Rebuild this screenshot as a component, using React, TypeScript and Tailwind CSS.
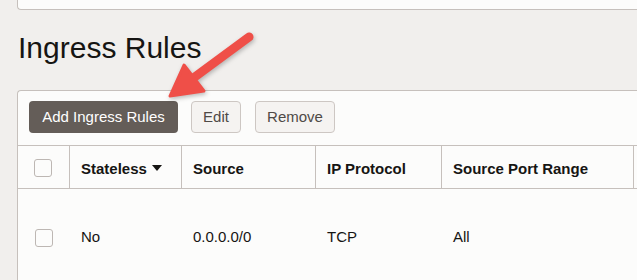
import React from "react";

export default function App() {
  const font = { fontFamily: '"Liberation Sans", Arial, sans-serif' };
  return (
    <div className="relative w-[637px] h-[280px] overflow-hidden bg-[#f1efed]" style={font}>
      <div className="w-[660px] pl-[17px] flex flex-col">
        <div className="h-[10px] bg-[#fcfcfb] border-l border-b border-[#c6c0bc] rounded-bl-[4px]" />
        <h1 className="mt-[23px] text-[30px] leading-[30px] font-normal text-[#161513] pl-[1px]">Ingress Rules</h1>
        <div className="mt-[27px] bg-[#fcfcfb] border-l border-t border-[#c6c0bc] rounded-tl-[4px] h-[200px]">
          <div className="flex pl-[11px] pt-[10px] pb-[12px]">
            <button className="w-[149px] h-[32px] rounded-[4px] bg-[#645d58] text-white text-[15px]">Add Ingress Rules</button>
            <button className="ml-[13px] w-[50px] h-[32px] rounded-[4px] bg-[#f5f3f1] border border-[#cdc7c3] text-[#4f4a46] text-[15px]">Edit</button>
            <button className="ml-[14px] w-[80px] h-[32px] rounded-[4px] bg-[#f5f3f1] border border-[#cdc7c3] text-[#4f4a46] text-[15px]">Remove</button>
          </div>
          <div className="flex h-[44px] border-t border-b border-[#c6c0bc] text-[15px] font-bold text-[#161513]">
            <div className="w-[52px] border-r border-[#c6c0bc] flex items-center justify-center pr-[1px]">
              <span className="block w-[18px] h-[18px] rounded-[3px] border border-[#bdb7b3] bg-[#fcfcfb] mt-[1px]" />
            </div>
            <div className="w-[112px] border-r border-[#c6c0bc] flex items-center pl-[11px] pt-[4px]">
              <span>Stateless</span>
              <svg width="10" height="6" viewBox="0 0 10 6" className="ml-[5px] -mt-[3px]">
                <path d="M0 0 L10 0 L5 6 Z" fill="#161513" />
              </svg>
            </div>
            <div className="w-[134px] border-r border-[#c6c0bc] flex items-center pl-[11px] pt-[4px]">Source</div>
            <div className="w-[126px] border-r border-[#c6c0bc] flex items-center pl-[11px] pt-[4px]">IP Protocol</div>
            <div className="w-[192px] border-r border-[#c6c0bc] flex items-center pl-[11px] pt-[4px]">Source Port Range</div>
            <div className="flex-1" />
          </div>
          <div className="flex h-[97px] items-center text-[15px] text-[#161513]">
            <div className="w-[52px] flex items-center justify-center pr-[1px]">
              <span className="block w-[18px] h-[18px] rounded-[3px] border border-[#bdb7b3] bg-[#fcfcfb]" />
            </div>
            <div className="w-[112px] pl-[11px]">No</div>
            <div className="w-[134px] pl-[11px]">0.0.0.0/0</div>
            <div className="w-[126px] pl-[11px]">TCP</div>
            <div className="w-[192px] pl-[11px]">All</div>
          </div>
        </div>
      </div>
      <svg
        className="absolute left-0 top-0 pointer-events-none drop-shadow-[1px_2px_2px_rgba(0,0,0,0.25)]"
        width="637"
        height="280"
        viewBox="0 0 637 280"
      >
        <line x1="249" y1="37" x2="192" y2="79" stroke="#ef4f48" strokeWidth="9" strokeLinecap="round" />
        <polygon
          points="170,96 184,65 204,91"
          fill="#ef4f48"
          stroke="#ef4f48"
          strokeWidth="3"
          strokeLinejoin="round"
        />
      </svg>
    </div>
  );
}
